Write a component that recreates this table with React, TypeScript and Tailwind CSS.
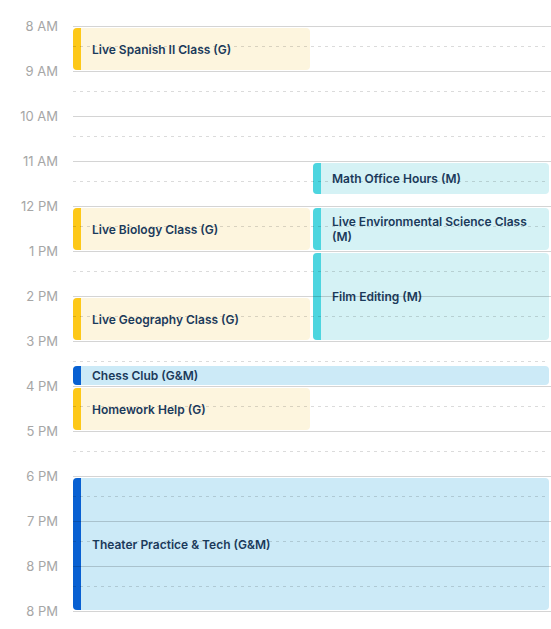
const ROW = 45;

const hours = [
  "8 AM",
  "9 AM",
  "10 AM",
  "11 AM",
  "12 PM",
  "1 PM",
  "2 PM",
  "3 PM",
  "4 PM",
  "5 PM",
  "6 PM",
  "7 PM",
  "8 PM",
  "8 PM",
];

type Tone = "gold" | "teal" | "blue";

interface CalEvent {
  title: string;
  start: number; // hours after 8 AM
  dur: number;
  col: "left" | "right" | "full";
  tone: Tone;
}

const events: CalEvent[] = [
  { title: "Live Spanish II Class (G)", start: 0, dur: 1, col: "left", tone: "gold" },
  { title: "Math Office Hours (M)", start: 3, dur: 0.75, col: "right", tone: "teal" },
  { title: "Live Biology Class (G)", start: 4, dur: 1, col: "left", tone: "gold" },
  { title: "Live Environmental Science Class (M)", start: 4, dur: 1, col: "right", tone: "teal" },
  { title: "Film Editing (M)", start: 5, dur: 2, col: "right", tone: "teal" },
  { title: "Live Geography Class (G)", start: 6, dur: 1, col: "left", tone: "gold" },
  { title: "Chess Club (G&M)", start: 7.5, dur: 0.5, col: "full", tone: "blue" },
  { title: "Homework Help (G)", start: 8, dur: 1, col: "left", tone: "gold" },
  { title: "Theater Practice & Tech (G&M)", start: 10, dur: 3, col: "full", tone: "blue" },
];

const toneCls: Record<Tone, { bg: string; bar: string }> = {
  gold: { bg: "bg-[#fdf5de]", bar: "bg-[#fdc818]" },
  teal: { bg: "bg-[#d5f2f5]", bar: "bg-[#4dd5df]" },
  blue: { bg: "bg-[#cceaf7]", bar: "bg-[#0860d2]" },
};

const colCls = {
  left: "left-0 w-[237px]",
  right: "left-[240px] w-[236px]",
  full: "left-0 w-[476px]",
};

function EventBlock({ ev }: { ev: CalEvent }) {
  const t = toneCls[ev.tone];
  return (
    <div
      className={`absolute flex overflow-hidden rounded-[4px] ${t.bg} ${colCls[ev.col]}`}
      style={{ top: ev.start * ROW + 2, height: ev.dur * ROW - 3 }}
    >
      <div className={`w-[8px] shrink-0 ${t.bar}`} />
      <div className="flex flex-1 items-center pl-[11px] pr-[6px] text-[12px] font-semibold leading-[15px] text-[#1b3a5b]">
        {ev.title}
      </div>
    </div>
  );
}

function HourRow({ label, last }: { label: string; last?: boolean }) {
  return (
    <div className={`flex items-start ${last ? "h-[18px]" : "h-[45px]"}`}>
      <div className="-mt-[9px] h-[18px] w-[73px] shrink-0 pr-[15px] text-right text-[13px] leading-[18px] text-[#a6a6a6]">
        {label}
      </div>
      <div className="h-full flex-1 border-t border-black/[0.17]">
        {!last && (
          <div className="mt-[19px] mr-[3px] h-px bg-[linear-gradient(to_right,rgba(0,0,0,0.14)_3px,transparent_3px)] bg-[length:7px_1px]" />
        )}
      </div>
    </div>
  );
}

export default function App() {
  return (
    <div className="w-[551px] bg-white pt-[26px] font-['Inter',sans-serif]">
      <div className="relative">
        {/* events sit under the grid lines */}
        <div className="absolute inset-y-0 left-[73px] right-0">
          {events.map((ev) => (
            <EventBlock key={ev.title} ev={ev} />
          ))}
        </div>
        <div className="pointer-events-none relative z-10">
          {hours.map((h, i) => (
            <HourRow key={i} label={h} last={i === hours.length - 1} />
          ))}
        </div>
      </div>
    </div>
  );
}
